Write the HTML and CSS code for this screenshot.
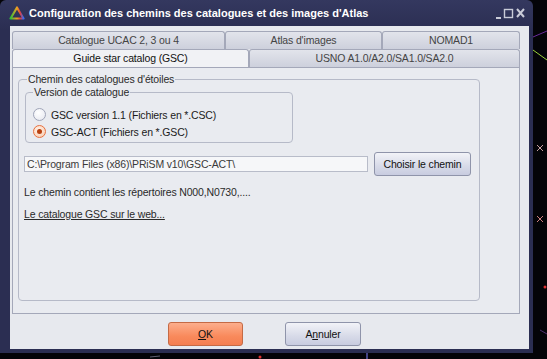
FILE: index.html
```html
<!DOCTYPE html>
<html lang="fr">
<head>
    <meta charset="UTF-8">
    <title>Configuration des chemins des catalogues</title>
    <link rel="stylesheet" href="styles.css">
</head>
<body>
    <!-- fond de carte du ciel derrière la fenêtre -->
    <svg class="sky" width="547" height="359" viewBox="0 0 547 359">
        <line x1="533" y1="37" x2="547" y2="31" stroke="#6a2a9a" stroke-width="1"/>
        <line x1="533" y1="50" x2="547" y2="60" stroke="#9ad23a" stroke-width="1"/>
        <path d="M537 145 l6 6 M537 151 l6 -6" stroke="#c8a0a0" stroke-width="1"/>
        <path d="M537 216 l6 6 M537 222 l6 -6" stroke="#d08080" stroke-width="1"/>
        <circle cx="545" cy="287" r="1.5" fill="#e03030"/>
        <line x1="540" y1="330" x2="547" y2="334" stroke="#503070" stroke-width="1"/>
        <circle cx="260" cy="357" r="1.5" fill="#e03030"/>
        <line x1="367" y1="353" x2="367" y2="359" stroke="#8080ff" stroke-width="1"/>
        <line x1="150" y1="357" x2="160" y2="356" stroke="#606070" stroke-width="1"/>
    </svg>

    <div class="window">
        <div class="titlebar">
            <svg class="app-icon" width="16" height="14" viewBox="0 0 16 14">
                <defs>
                    <linearGradient id="rainbow" x1="0" y1="0" x2="1" y2="0">
                        <stop offset="0" stop-color="#2fbf3a"/>
                        <stop offset="0.5" stop-color="#f0a020"/>
                        <stop offset="0.75" stop-color="#e04040"/>
                        <stop offset="1" stop-color="#3a6cf0"/>
                    </linearGradient>
                </defs>
                <path d="M8 1.5 L14.5 12.5 L1.5 12.5 Z" fill="none" stroke="url(#rainbow)" stroke-width="2.2" stroke-linejoin="round"/>
            </svg>
            <span class="title">Configuration des chemins des catalogues et des images d'Atlas</span>
            <svg class="win-controls" width="29" height="12" viewBox="0 0 29 12">
                <rect x="0" y="9" width="5" height="2" fill="#c9cbd8"/>
                <rect x="8.5" y="1.5" width="8" height="8" fill="none" stroke="#c9cbd8" stroke-width="1.4"/>
                <path d="M21 1 L28 9 M28 1 L21 9" stroke="#c9cbd8" stroke-width="2"/>
            </svg>
        </div>

        <div class="client">
            <div class="tabs">
                <div class="tab-row">
                    <div class="tab tab-ucac">Catalogue UCAC 2, 3 ou 4</div>
                    <div class="tab tab-atlas">Atlas d'images</div>
                    <div class="tab tab-nomad">NOMAD1</div>
                </div>
                <div class="tab-row">
                    <div class="tab tab-gsc selected">Guide star catalog (GSC)</div>
                    <div class="tab tab-usno">USNO A1.0/A2.0/SA1.0/SA2.0</div>
                </div>
            </div>

            <div class="pane">
                <fieldset class="group">
                    <legend>Chemin des catalogues d'étoiles</legend>

                    <fieldset class="group version">
                        <legend>Version de catalogue</legend>
                        <label class="radio"><span class="dot"></span>GSC version 1.1 (Fichiers en *.CSC)</label>
                        <label class="radio"><span class="dot checked"></span>GSC-ACT (Fichiers en *.GSC)</label>
                    </fieldset>

                    <div class="path-row">
                        <div class="path-field">C:\Program Files (x86)\PRiSM v10\GSC-ACT\</div>
                        <button class="btn btn-path">Choisir le chemin</button>
                    </div>

                    <p class="info">Le chemin contient les répertoires N000,N0730,....</p>
                    <a class="web-link" href="#">Le catalogue GSC sur le web...</a>
                </fieldset>
            </div>

            <div class="actions">
                <button class="btn btn-ok"><u>O</u>K</button>
                <button class="btn btn-cancel">A<u>n</u>nuler</button>
            </div>
        </div>
    </div>
</body>
</html>
```

FILE: styles.css
```css
/* fond */
body {
    margin: 0;
    width: 547px;
    height: 359px;
    overflow: hidden;
    position: relative;
    background-color: #040408;
    font-family: 'Liberation Sans', Arial, sans-serif;
    font-size: 10.5px;
    letter-spacing: -0.15px;
    color: #1c1c1c;
}
.sky {
    position: absolute;
    left: 0;
    top: 0;
}
/* fenêtre */
.window {
    position: relative;
    width: 533px;
    height: 353px;
    background: linear-gradient(#34385f, #2b2e52 30px);
    border-radius: 6px 6px 0 0;
    display: flex;
    flex-direction: column;
}
.titlebar {
    height: 26px;
    flex: none;
    display: flex;
    align-items: center;
    padding: 0 8px 0 9px;
    color: #fff;
}
.app-icon {
    flex: none;
}
.title {
    flex: 1;
    margin-left: 4px;
    font-weight: bold;
    font-size: 11px;
    letter-spacing: 0;
    white-space: nowrap;
}
.win-controls {
    flex: none;
    margin-top: 2px;
}
.client {
    flex: 1;
    margin: 0 4px 4px 10px;
    padding: 5px 9px 0 2px;
    background-color: #e7e9ee;
    display: flex;
    flex-direction: column;
}
/* onglets */
.tab-row {
    display: flex;
    height: 18px;
}
.tab {
    box-sizing: border-box;
    border: 1px solid #a4a8b9;
    border-bottom: none;
    border-radius: 3px 3px 0 0;
    background: linear-gradient(#e2e4eb, #cdd0dc);
    text-align: center;
    line-height: 17px;
    color: #444;
    white-space: nowrap;
}
.tab-ucac { width: 213px; }
.tab-atlas { width: 157px; }
.tab-nomad { width: 138px; }
.tab-gsc { width: 237px; }
.tab-usno { width: 271px; }
.tab.selected {
    background: #f1f2f5;
    color: #111;
}
.pane {
    box-sizing: border-box;
    height: 247px;
    border: 1px solid #a4a8b9;
    background-color: #e9ebf0;
    padding: 5px 39px 12px 5px;
    display: flex;
    flex-direction: column;
}
/* cadres */
.group {
    margin: 0;
    padding: 0 6px 0 5px;
    border: 1px solid #b6bac8;
    border-radius: 4px;
    flex: 1;
}
.group legend {
    padding: 0 1px;
    margin-left: 3px;
    color: #2a2a2a;
}
.group.version {
    flex: none;
    width: 268px;
    box-sizing: border-box;
    margin: 1px 0 0 1px;
    padding: 8px 0 2px 7px;
}
.group.version legend {
    margin-left: 0;
}
.radio {
    display: flex;
    align-items: center;
    height: 17px;
    gap: 5px;
    color: #1a1a1a;
}
.dot {
    box-sizing: border-box;
    width: 13px;
    height: 13px;
    border-radius: 50%;
    border: 1px solid #a0a5b8;
    background: radial-gradient(circle at 40% 35%, #ffffff, #e4e6ee);
    display: flex;
    align-items: center;
    justify-content: center;
}
.dot.checked {
    border-color: #e8703e;
    background: radial-gradient(circle at 40% 35%, #fff3ea, #f8c7a8);
}
.dot.checked::after {
    content: "";
    width: 5px;
    height: 5px;
    border-radius: 50%;
    background-color: #b8400f;
}
/* chemin */
.path-row {
    display: flex;
    align-items: center;
    gap: 6px;
    margin-top: 9px;
    height: 24px;
}
.path-field {
    box-sizing: border-box;
    width: 344px;
    height: 16px;
    border: 1px solid #b8bcc9;
    background-color: #f6f7f9;
    padding-left: 2px;
    line-height: 14px;
    color: #3a3a3a;
    white-space: nowrap;
}
.btn {
    box-sizing: border-box;
    height: 24px;
    border: 1px solid #8f94aa;
    border-radius: 3px;
    background: linear-gradient(#f2f3f8, #d7dae8 60%, #c8cce0);
    font-family: inherit;
    font-size: 10.5px;
    letter-spacing: -0.15px;
    color: #111;
    padding: 0;
    cursor: pointer;
}
.btn-path {
    width: 97px;
}
.info {
    margin: 10px 0 0;
    line-height: 13px;
    color: #2a2a2a;
}
.web-link {
    display: inline-block;
    margin-top: 9px;
    line-height: 13px;
    color: #2a2a2a;
}
/* boutons du bas */
.actions {
    display: flex;
    gap: 42px;
    padding: 8px 0 0 156px;
}
.btn-ok {
    width: 75px;
    border-color: #c46a45;
    background: linear-gradient(#fcae8c, #f98a5c 60%, #f47e50);
}
.btn-cancel {
    width: 76px;
}
```
